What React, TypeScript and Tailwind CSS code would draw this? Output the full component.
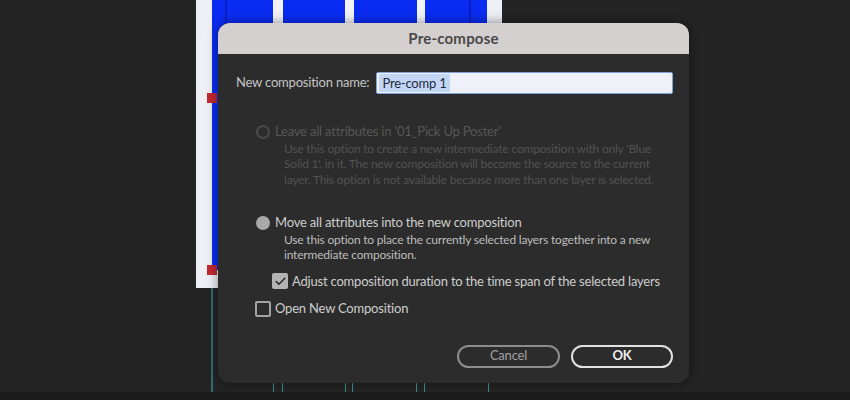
import { Check } from "lucide-react";

const font = { fontFamily: "Lato, 'Open Sans', sans-serif" };

function Radio({ checked, disabled }: { checked?: boolean; disabled?: boolean }) {
    if (checked) return <span className="block w-[14px] h-[14px] rounded-full bg-[#a9a9a9] shrink-0" />;
    return (
        <span
            className={`block w-[14px] h-[14px] rounded-full border-2 shrink-0 ${
                disabled ? "border-[#4a4a4a]" : "border-[#a9a9a9]"
            }`}
        />
    );
}

function Checkbox({ checked }: { checked?: boolean }) {
    if (checked)
        return (
            <span className="flex items-center justify-center w-[16px] h-[16px] rounded-[2px] bg-[#b4b4b4] shrink-0">
                <Check size={13} strokeWidth={3} className="text-[#2a2a2a]" />
            </span>
        );
    return <span className="block w-[16px] h-[16px] rounded-[2px] border-2 border-[#a3a3a3] shrink-0" />;
}

function Background() {
    return (
        <div className="w-[850px] h-[400px] flex flex-col">
            <div className="flex h-[288px] shrink-0">
                <div className="w-[196px]" />
                <div className="w-[306px] bg-[#eef0f6] flex flex-col">
                    <div className="flex ml-[16px] w-[275px] h-[270px] relative">
                        <div className="w-[61px] bg-[#0a2cf2] flex">
                            <div className="w-[13px]" />
                            <div className="w-[2px] bg-[#0820c0]" />
                        </div>
                        <div className="w-[10px] bg-[#f2f3f8]" />
                        <div className="w-[62px] bg-[#0a2cf2]" />
                        <div className="w-[9px] bg-[#f2f3f8]" />
                        <div className="w-[63px] bg-[#0a2cf2]" />
                        <div className="w-[8px] bg-[#f2f3f8]" />
                        <div className="w-[62px] bg-[#0a2cf2] flex justify-end">
                            <div className="w-[2px] bg-[#0820c0] mr-[16px]" />
                        </div>
                        <span className="absolute left-[-5px] top-[93px] w-[10px] h-[10px] bg-[#c22a30]" />
                        <span className="absolute left-[-5px] top-[265px] w-[10px] h-[10px] bg-[#c22a30]" />
                    </div>
                </div>
            </div>
            <div className="flex h-[104px]">
                <div className="w-[211px]" />
                <div className="w-[2px] bg-[#2e6b72]" />
            </div>
        </div>
    );
}

function Timeline() {
    const ticks = [273, 282, 345, 352, 416, 424, 488];
    return (
        <div className="absolute left-0 top-[382px] w-[850px] h-[18px]">
            {ticks.map((x) => (
                <span key={x} className="absolute top-0 w-[1px] h-[10px] bg-[#3c8f96]" style={{ left: x }} />
            ))}
            <div className="absolute left-0 top-[10px] w-full h-[8px] bg-[#1b1b1b]" />
        </div>
    );
}

export default function App() {
    return (
        <div className="relative w-[850px] h-[400px] bg-[#242424] overflow-hidden" style={font}>
            <Background />
            <Timeline />

            <div className="absolute left-[218px] top-[23px] w-[471px] h-[360px] rounded-[12px] overflow-hidden bg-[#2c2c2c] shadow-[0_0_12px_rgba(0,0,0,0.45)] flex flex-col">
                <div className="h-[31px] shrink-0 bg-[#d4d0cf] flex items-center justify-center">
                    <span className="text-[15px] font-bold text-[#4a4848] tracking-[0.2px]">Pre-compose</span>
                </div>

                <div className="flex flex-col pl-[18px] pr-[16px] tracking-[-0.2px]">
                    <div className="flex items-center mt-[18px] gap-[6px]">
                        <span className="text-[13px] text-[#c4c4c4]">New composition name:</span>
                        <div className="flex-1 h-[22px] ml-[1px] rounded-[2px] bg-[#eef1f7] border border-[#7ea2dc] flex items-center px-[2px]">
                            <span className="text-[13px] text-[#1f2a40] bg-[#c3d7f4] px-[3px] leading-[18px]">
                                Pre-comp 1
                            </span>
                        </div>
                    </div>

                    <div className="flex flex-col mt-[28px] ml-[20px]">
                        <div className="flex items-center gap-[5px]">
                            <Radio disabled />
                            <span className="text-[13px] text-[#575757]">Leave all attributes in '01_Pick Up Poster'</span>
                        </div>
                        <p className="ml-[28px] -mt-[1px] text-[12px] leading-[15.5px] text-[#525252] whitespace-nowrap">
                            Use this option to create a new intermediate composition with only 'Blue
                            <br />
                            Solid 1', in it. The new composition will become the source to the current
                            <br />
                            layer. This option is not available because more than one layer is selected.
                        </p>
                    </div>

                    <div className="flex flex-col mt-[26px] ml-[20px]">
                        <div className="flex items-center gap-[5px]">
                            <Radio checked />
                            <span className="text-[13px] text-[#cdcdcd]">Move all attributes into the new composition</span>
                        </div>
                        <p className="ml-[28px] -mt-[1px] text-[12px] leading-[15.5px] text-[#bdbdbd] whitespace-nowrap">
                            Use this option to place the currently selected layers together into a new
                            <br />
                            intermediate composition.
                        </p>
                    </div>

                    <div className="flex items-center gap-[4px] mt-[9px] ml-[36px]">
                        <Checkbox checked />
                        <span className="text-[13px] text-[#cdcdcd] whitespace-nowrap">
                            Adjust composition duration to the time span of the selected layers
                        </span>
                    </div>

                    <div className="flex items-center gap-[4px] mt-[8px] ml-[19px]">
                        <Checkbox />
                        <span className="text-[13px] text-[#cdcdcd]">Open New Composition</span>
                    </div>

                    <div className="flex justify-end gap-[11px] mt-[26px]">
                        <button className="w-[103px] h-[23px] rounded-full border-2 border-[#8c8c8c] text-[13px] text-[#a0a0a0] flex items-center justify-center">
                            Cancel
                        </button>
                        <button className="w-[102px] h-[23px] rounded-full border-2 border-[#e2e2e2] text-[13px] font-bold text-[#f0f0f0] flex items-center justify-center">
                            OK
                        </button>
                    </div>
                </div>
            </div>
        </div>
    );
}
